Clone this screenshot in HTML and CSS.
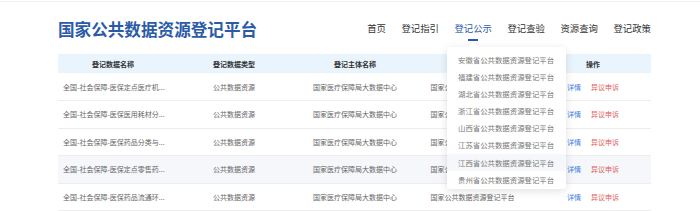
FILE: index.html
```html
<!DOCTYPE html>
<html lang="zh-CN">
<head>
<meta charset="utf-8">
<title>国家公共数据资源登记平台</title>
<link rel="stylesheet" href="styles.css">
</head>
<body>
<div class="page">
  <div class="topline"></div>
  <header class="header">
    <h1 class="title">国家公共数据资源登记平台</h1>
    <nav class="nav">
      <a class="nav-item">首页</a>
      <a class="nav-item">登记指引</a>
      <a class="nav-item active">登记公示</a>
      <a class="nav-item">登记查验</a>
      <a class="nav-item">资源查询</a>
      <a class="nav-item">登记政策</a>
    </nav>
  </header>
  <table class="grid">
    <colgroup>
      <col class="c1"><col class="c2"><col class="c3"><col class="c4"><col class="c5">
    </colgroup>
    <thead>
      <tr><th>登记数据名称</th><th>登记数据类型</th><th>登记主体名称</th><th>登记平台名称</th><th>操作</th></tr>
    </thead>
    <tbody>
      <tr><td class="name">全国-社会保障-医保定点医疗机...</td><td>公共数据资源</td><td>国家医疗保障局大数据中心</td><td>国家公共数据资源登记平台</td><td><span class="link">详情</span><span class="warn">异议申诉</span></td></tr>
      <tr><td class="name">全国-社会保障-医保医用耗材分...</td><td>公共数据资源</td><td>国家医疗保障局大数据中心</td><td>国家公共数据资源登记平台</td><td><span class="link">详情</span><span class="warn">异议申诉</span></td></tr>
      <tr><td class="name">全国-社会保障-医保药品分类与...</td><td>公共数据资源</td><td>国家医疗保障局大数据中心</td><td>国家公共数据资源登记平台</td><td><span class="link">详情</span><span class="warn">异议申诉</span></td></tr>
      <tr class="hover"><td class="name">全国-社会保障-医保定点零售药...</td><td>公共数据资源</td><td>国家医疗保障局大数据中心</td><td>国家公共数据资源登记平台</td><td><span class="link">详情</span><span class="warn">异议申诉</span></td></tr>
      <tr><td class="name">全国-社会保障-医保药品流通环...</td><td>公共数据资源</td><td>国家医疗保障局大数据中心</td><td>国家公共数据资源登记平台</td><td><span class="link">详情</span><span class="warn">异议申诉</span></td></tr>
    </tbody>
  </table>
  <div class="dropdown">
    <div class="arrow"></div>
    <ul class="menu">
      <li>安徽省公共数据资源登记平台</li>
      <li>福建省公共数据资源登记平台</li>
      <li>湖北省公共数据资源登记平台</li>
      <li>浙江省公共数据资源登记平台</li>
      <li>山西省公共数据资源登记平台</li>
      <li>江苏省公共数据资源登记平台</li>
      <li class="hover">江西省公共数据资源登记平台</li>
      <li>贵州省公共数据资源登记平台</li>
    </ul>
  </div>
</div>
</body>
</html>
```
FILE: styles.css
```css
* { box-sizing: border-box; }
html, body { margin: 0; padding: 0; background: #fff; }
body { font-family: "Noto Sans CJK SC", "Noto Sans", sans-serif; color: #333; }
.page { position: relative; width: 700px; height: 211px; overflow: hidden; }
.topline { height: 1px; margin-top: 1px; background: #efefef; }
.header {
  display: flex; justify-content: space-between; align-items: center;
  height: 52px; padding-top: 2px; margin: 0 49px 0 58px;
}
.title { margin: 0; font-size: 16.6px; font-weight: 700; color: #2c5ba6; line-height: 1; letter-spacing: 0; }
.nav { display: flex; gap: 15.5px; align-items: center; }
.nav-item { position: relative; font-size: 9.4px; line-height: 1; color: #333; text-decoration: none; }
.nav-item.active { color: #2c5ba6; }
.nav-item.active::after {
  content: ""; position: absolute; left: 50%; bottom: -7px; width: 10px; height: 1.5px;
  margin-left: -5px; background: #2c5ba6;
}
.grid { margin-left: 58px; width: 593px; border-collapse: collapse; table-layout: fixed; font-size: 7px; }
.c1 { width: 110px; } .c2 { width: 132px; } .c3 { width: 110px; } .c4 { width: 125px; } .c5 { width: 116px; }
.grid th { height: 19px; background: #eaf4fd; font-weight: 700; color: #333; text-align: center; padding: 0; }
.grid td { height: 27.5px; border-bottom: 1px solid #ededed; text-align: center; color: #666; padding: 0; white-space: nowrap; }
.grid td.name { text-align: left; padding-left: 5px; }
.grid tr.hover td { background: #f5f7fa; }
.link { color: #3b7de0; margin-right: 10px; }
.warn { color: #e25b5b; }
.dropdown {
  position: absolute; left: 447px; top: 47px; width: 119px; height: 142px;
  background: #fff; border-radius: 3px; box-shadow: 0 2px 8px rgba(0,0,0,0.12);
}
.arrow {
  position: absolute; top: -4px; left: 22px; width: 8px; height: 8px;
  background: #fff; transform: rotate(45deg); box-shadow: -1px -1px 2px rgba(0,0,0,0.05);
}
.menu { position: relative; list-style: none; margin: 0; padding: 4px 0 0; }
.menu li { height: 17.1px; line-height: 17.1px; padding-left: 11px; font-size: 7.4px; color: #777; white-space: nowrap; }
.menu li.hover { background: #f5f7fa; }
```
